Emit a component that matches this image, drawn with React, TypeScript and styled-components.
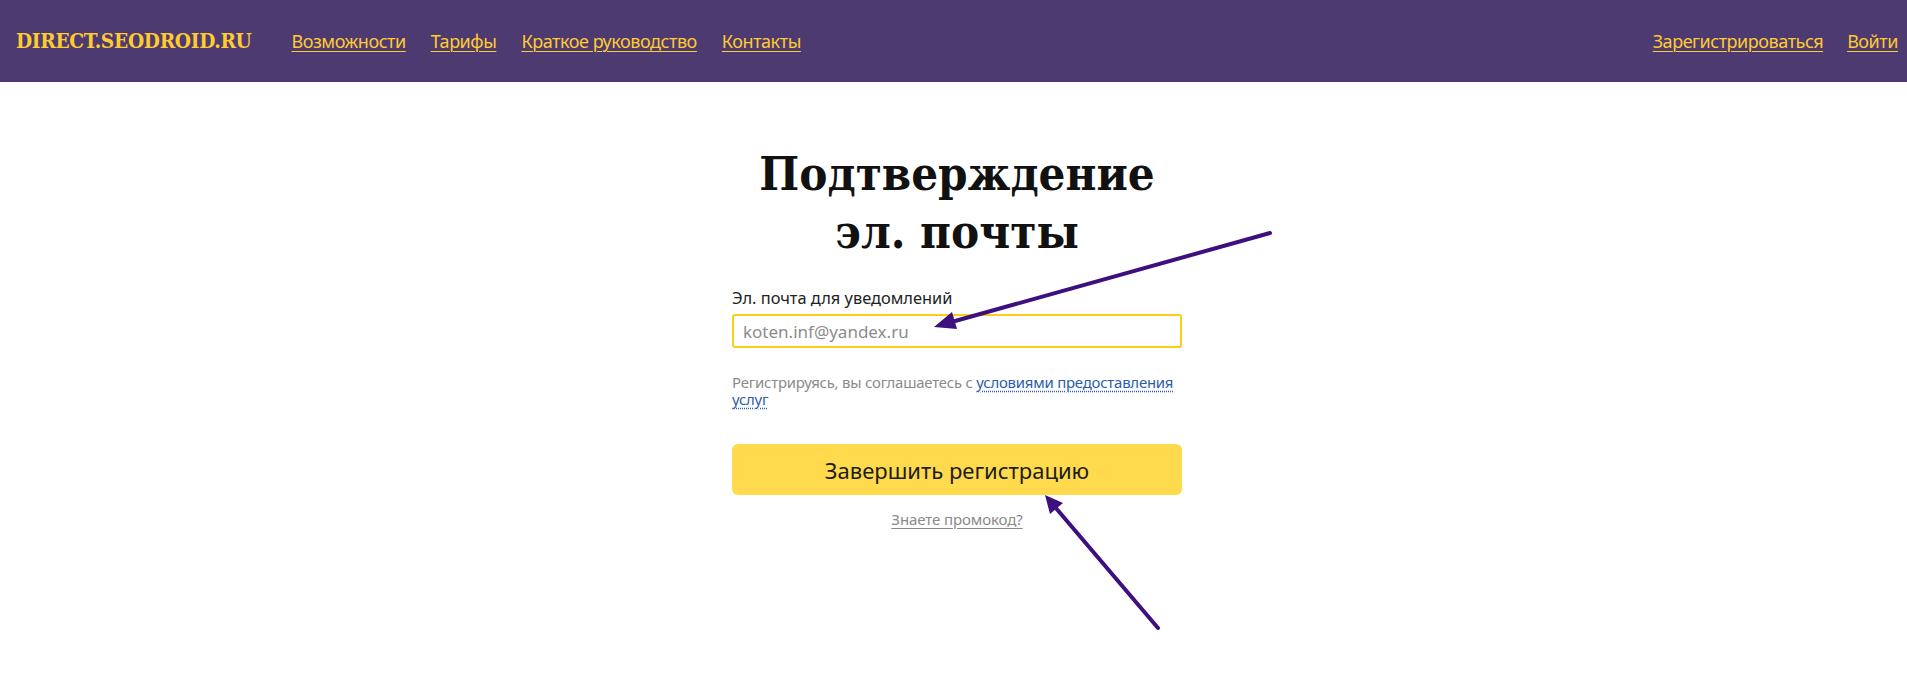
import styled, { createGlobalStyle } from 'styled-components'

const GlobalStyle = createGlobalStyle`
    body {
        margin: 0;
        background: #ffffff;
        font-family: 'Noto Sans', 'Open Sans', sans-serif;
    }
`

const Page = styled.div`
    position: relative;
    min-height: 700px;
`

const Header = styled.header`
    display: flex;
    align-items: center;
    height: 82px;
    padding: 0 9px 0 16px;
    background-color: #4d3a71;
`

const Logo = styled.a`
    font-family: 'DejaVu Serif Condensed', 'DejaVu Serif', serif;
    font-weight: bold;
    font-size: 20.7px;
    letter-spacing: -0.3px;
    color: #ffcb2f;
    text-decoration: none;
    margin-right: 40px;
`

const Nav = styled.nav`
    display: flex;
    align-items: center;
    gap: 25px;
    flex: 1;
`

const NavLink = styled.a`
    font-family: 'Noto Sans', sans-serif;
    font-size: 18px;
    color: #ffcb2f;
    text-decoration: underline;
    text-underline-offset: 3px;
    text-decoration-thickness: 1px;
    letter-spacing: -0.45px;
`

const Auth = styled.div`
    display: flex;
    gap: 24px;
`

const Main = styled.main`
    display: flex;
    flex-direction: column;
    align-items: center;
    padding: 63px 0 0 7px;
`

const Title = styled.h1`
    margin: 0 0 26px;
    font-family: 'DejaVu Serif Condensed', 'DejaVu Serif', serif;
    font-weight: bold;
    font-size: 47px;
    line-height: 58px;
    text-align: center;
    color: #111;
`

const Form = styled.form`
    display: flex;
    flex-direction: column;
    width: 450px;
`

const Label = styled.label`
    font-size: 16.4px;
    line-height: 21px;
    color: #222;
    margin-bottom: 6px;
`

const Input = styled.input`
    box-sizing: border-box;
    height: 34px;
    padding: 0 9px;
    border: 2px solid #ffcc19;
    border-radius: 3px;
    font-family: 'Noto Sans', sans-serif;
    font-size: 17px;
    color: #333;
    outline: none;

    &::placeholder {
        color: #8c8c8c;
    }
`

const Terms = styled.p`
    margin: 26px 0 0;
    font-size: 14.9px;
    line-height: 17px;
    color: #8a8a8a;
    letter-spacing: -0.2px;
`

const TermsLink = styled.a`
    color: #2a5caa;
    text-decoration: underline dotted;
    text-underline-offset: 3px;
`

const Submit = styled.button`
    margin-top: 36px;
    height: 51px;
    border: none;
    border-radius: 6px;
    background-color: #ffda4d;
    font-family: 'Noto Sans', sans-serif;
    font-size: 22px;
    color: #1c1c1c;
    cursor: pointer;
`

const Promo = styled.a`
    align-self: center;
    margin-top: 14px;
    font-size: 15px;
    line-height: 20px;
    color: #8a8a8a;
    text-decoration: underline;
    text-underline-offset: 3px;
    letter-spacing: -0.1px;
`

const Arrows = styled.svg`
    position: absolute;
    left: 0;
    top: 0;
    pointer-events: none;
`

const ARROW = '#3d0f7f'

export default function App() {
    return (
        <>
            <GlobalStyle />
            <Page>
                <Header>
                    <Logo href="#">DIRECT.SEODROID.RU</Logo>
                    <Nav>
                        <NavLink href="#">Возможности</NavLink>
                        <NavLink href="#">Тарифы</NavLink>
                        <NavLink href="#">Краткое руководство</NavLink>
                        <NavLink href="#">Контакты</NavLink>
                    </Nav>
                    <Auth>
                        <NavLink href="#">Зарегистрироваться</NavLink>
                        <NavLink href="#">Войти</NavLink>
                    </Auth>
                </Header>
                <Main>
                    <Title>
                        Подтверждение
                        <br />
                        эл. почты
                    </Title>
                    <Form onSubmit={(e) => e.preventDefault()}>
                        <Label>Эл. почта для уведомлений</Label>
                        <Input placeholder="koten.inf@yandex.ru" />
                        <Terms>
                            Регистрируясь, вы соглашаетесь с{' '}
                            <TermsLink href="#">условиями предоставления услуг</TermsLink>
                        </Terms>
                        <Submit type="submit">Завершить регистрацию</Submit>
                        <Promo href="#">Знаете промокод?</Promo>
                    </Form>
                </Main>
                <Arrows width="1907" height="700">
                    <line x1="1270" y1="233" x2="948" y2="323" stroke={ARROW} strokeWidth="4" strokeLinecap="round" />
                    <polygon points="934,327 952,312 957,329" fill={ARROW} />
                    <line x1="1158" y1="628" x2="1055" y2="507" stroke={ARROW} strokeWidth="4" strokeLinecap="round" />
                    <polygon points="1045,495 1063,503 1050,514" fill={ARROW} />
                </Arrows>
            </Page>
        </>
    )
}
